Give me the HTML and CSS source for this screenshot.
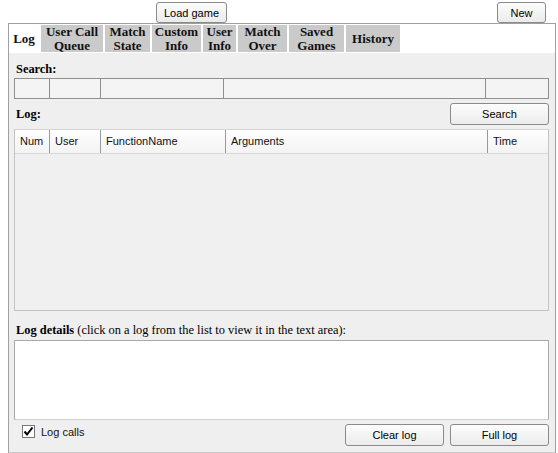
FILE: index.html
```html
<!DOCTYPE html>
<html>
<head>
<meta charset="utf-8">
<link rel="stylesheet" href="styles.css">
</head>
<body>
<div class="topbar">
  <button class="btn btn-load">Load game</button>
  <button class="btn btn-new">New</button>
</div>
<div class="panel">
  <div class="tabs">
    <div class="tab t-log active">Log</div>
    <div class="tab t-ucq">User Call<br>Queue</div>
    <div class="tab t-ms">Match<br>State</div>
    <div class="tab t-ci">Custom<br>Info</div>
    <div class="tab t-ui">User<br>Info</div>
    <div class="tab t-mo">Match<br>Over</div>
    <div class="tab t-sg">Saved<br>Games</div>
    <div class="tab t-h">History</div>
  </div>
  <div class="content">
    <div class="label">Search:</div>
    <div class="searchrow">
      <div class="cell c-num"></div>
      <div class="cell c-user"></div>
      <div class="cell c-fn"></div>
      <div class="cell c-args"></div>
      <div class="cell c-time"></div>
    </div>
    <div class="logbar">
      <div class="label">Log:</div>
      <button class="btn btn-wide">Search</button>
    </div>
    <div class="table">
      <div class="thead">
        <div class="th c-num">Num</div>
        <div class="th c-user">User</div>
        <div class="th c-fn">FunctionName</div>
        <div class="th c-args">Arguments</div>
        <div class="th c-time">Time</div>
      </div>
      <div class="tbody"></div>
    </div>
    <div class="label details"><b>Log details</b> <span class="normal">(click on a log from the list to view it in the text area):</span></div>
    <div class="textarea"></div>
    <div class="footer">
      <label class="check"><span class="box"><svg width="11" height="11" viewBox="0 0 11 11"><path d="M1.5 5.5 L4 8.5 L9.5 1.5" fill="none" stroke="#000" stroke-width="2"/></svg></span>Log calls</label>
      <div class="footbtns">
        <button class="btn btn-wide">Clear log</button>
        <button class="btn btn-wide">Full log</button>
      </div>
    </div>
  </div>
</div>
</body>
</html>
```
FILE: styles.css
```css
html, body {
  margin: 0;
  padding: 0;
  background: #fff;
}
body {
  width: 558px;
  height: 453px;
  overflow: hidden;
  font-family: "Liberation Sans", Arial, sans-serif;
}
.btn {
  font-family: "Liberation Sans", Arial, sans-serif;
  font-size: 11px;
  color: #000;
  background: linear-gradient(#fdfdfd, #ebebeb);
  border: 1px solid #8a8a8a;
  border-radius: 3px;
  height: 21px;
  padding: 0;
  margin: 0;
}
.topbar {
  display: flex;
  height: 23px;
  align-items: flex-start;
  padding-top: 2px;
  box-sizing: border-box;
}
.btn-load {
  margin-left: 156px;
  width: 71px;
}
.btn-new {
  margin-left: auto;
  margin-right: 12px;
  width: 49px;
}
.panel {
  margin-left: 8px;
  width: 548px;
  height: 430px;
  box-sizing: border-box;
  border: 1px solid #a0a0a0;
  border-bottom-color: #c8c8c8;
  display: flex;
  flex-direction: column;
}
.tabs {
  display: flex;
  height: 29px;
  background: #fff;
  gap: 2px;
  padding-top: 1px;
  box-sizing: border-box;
}
.tab {
  font-family: "Liberation Serif", "Times New Roman", serif;
  font-weight: bold;
  font-size: 13px;
  line-height: 13.5px;
  text-align: center;
  background: #cacaca;
  display: flex;
  align-items: center;
  justify-content: center;
  height: 27px;
  color: #111;
  flex: none;
}
.tab.active {
  background: #fff;
}
.t-log { width: 30px; }
.t-ucq { width: 62px; }
.t-ms { width: 45px; }
.t-ci { width: 49px; }
.t-ui { width: 33px; }
.t-mo { width: 49px; }
.t-sg { width: 55px; }
.t-h { width: 54px; }
.content {
  flex: 1;
  background: #efefef;
  padding: 9px 6px 0 5px;
  display: flex;
  flex-direction: column;
}
.label {
  font-family: "Liberation Serif", "Times New Roman", serif;
  font-weight: bold;
  font-size: 12.4px;
  line-height: 14px;
  padding-left: 2px;
  color: #000;
}
.label .normal {
  font-weight: normal;
}
.searchrow {
  display: flex;
  margin-top: 2px;
  height: 21px;
  border: 1px solid #8f8f8f;
  box-sizing: border-box;
  background: #f4f4f4;
}
.cell, .th {
  box-sizing: border-box;
  flex: none;
}
.cell {
  border-right: 1px solid #8f8f8f;
}
.cell:last-child { border-right: none; }
.c-num { width: 35px; }
.c-user { width: 51px; }
.c-fn { width: 125px; }
.c-args { width: 262px; }
.c-time { flex: 1; }
.searchrow .c-fn { width: 123px; }
.logbar {
  display: flex;
  align-items: center;
  justify-content: space-between;
  margin-top: 4px;
  height: 22px;
}
.btn-wide {
  width: 99px;
  height: 22px;
  font-size: 11px;
}
.table {
  margin-top: 4px;
  border: 1px solid #c4c4c4;
  border-top-color: #d4d4d4;
  height: 182px;
  box-sizing: border-box;
  display: flex;
  flex-direction: column;
  background: #f0f0f0;
}
.thead {
  display: flex;
  height: 23px;
  background: linear-gradient(#fefefe, #f3f3f3);
  border-bottom: 1px solid #d8d8d8;
}
.th {
  font-size: 11px;
  line-height: 23px;
  padding-left: 5px;
  border-right: 1px solid #9a9a9a;
  color: #111;
}
.th.c-time { flex: 1; }
.th:last-child { border-right: none; }
.tbody { flex: 1; }
.details {
  margin-top: 12px;
}
.textarea {
  margin-top: 3px;
  height: 80px;
  background: #fff;
  border: 1px solid #a8a8a8;
  border-bottom-color: #d0d0d0;
  box-sizing: border-box;
}
.footer {
  display: flex;
  justify-content: space-between;
  align-items: flex-start;
  margin-top: 4px;
}
.check {
  display: flex;
  align-items: center;
  font-size: 11px;
  margin-left: 8px;
  margin-top: 1px;
  gap: 6px;
  color: #111;
}
.box {
  width: 13px;
  height: 13px;
  box-sizing: border-box;
  border: 1px solid #777;
  background: #fff;
  display: flex;
  align-items: center;
  justify-content: center;
}
.footbtns {
  display: flex;
  gap: 6px;
}
```
